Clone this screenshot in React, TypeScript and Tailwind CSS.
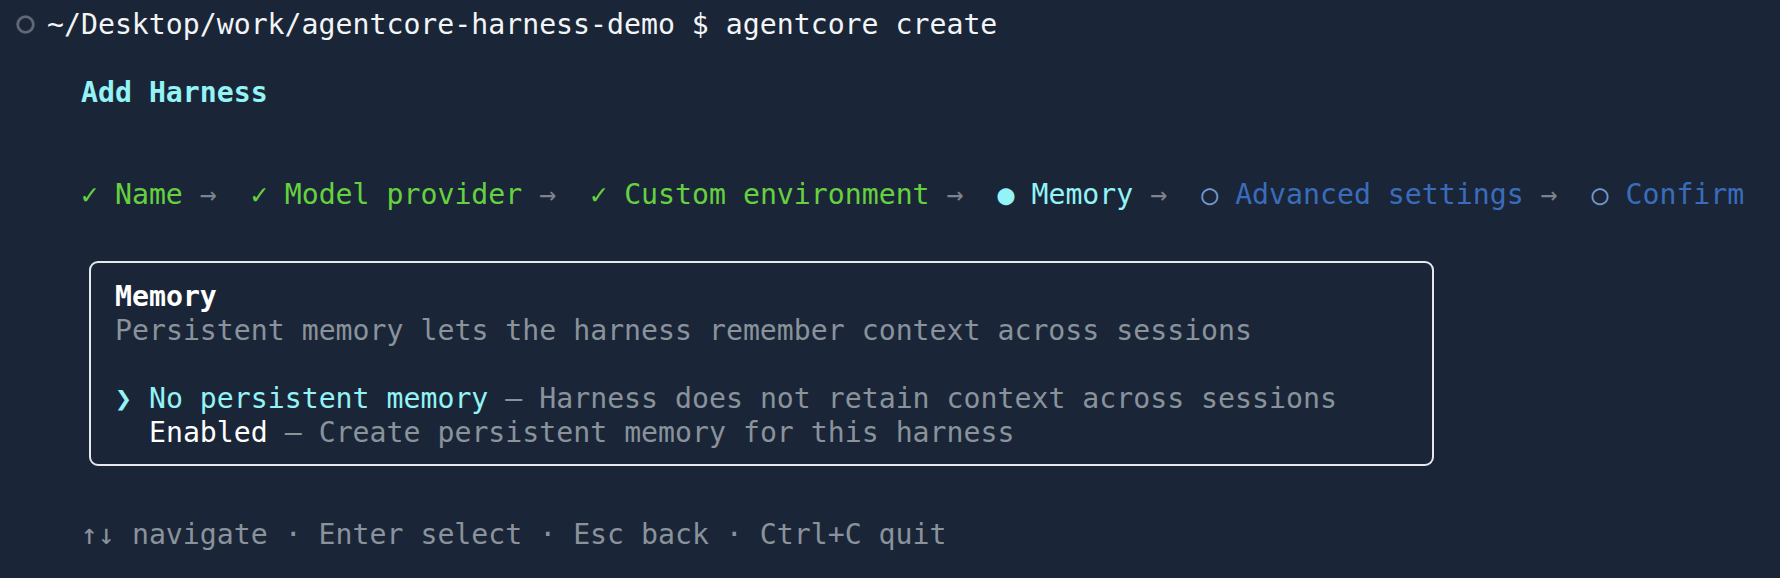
import type { ReactNode } from "react";

type StepState = "done" | "active" | "pending";

interface Step {
  label: string;
  state: StepState;
}

const steps: Step[] = [
  { label: "Name", state: "done" },
  { label: "Model provider", state: "done" },
  { label: "Custom environment", state: "done" },
  { label: "Memory", state: "active" },
  { label: "Advanced settings", state: "pending" },
  { label: "Confirm", state: "pending" },
];

function Line({ children }: { children?: ReactNode }) {
  return <div className="h-[34px] whitespace-pre">{children}</div>;
}

function StepLabel({ step }: { step: Step }) {
  if (step.state === "done") {
    return <span className="text-[#66d13f]">✓ {step.label}</span>;
  }

  if (step.state === "active") {
    return <span className="text-[#93f3f5]">● {step.label}</span>;
  }

  return (
    <>
      <span className="text-[#7598cf]">○</span>{" "}
      <span className="text-[#3a6cbc]">{step.label}</span>
    </>
  );
}

export default function App() {
  return (
    <div className="h-[578px] w-full overflow-hidden bg-[#1a2638] pt-[8px] font-['DejaVu_Sans_Mono',monospace] text-[28.2px] leading-[34px] text-[#f3f4f5]">

      {/* prompt */}
      <div className="flex h-[34px] items-center pl-[15px]">
        <svg width="21" height="21" viewBox="0 0 21 21" className="shrink-0 -translate-y-px">
          <circle cx="10.5" cy="10.5" r="7.8" fill="none" stroke="#5f6874" strokeWidth="2.8" />
        </svg>
        <span className="ml-[11px] whitespace-pre">
          ~/Desktop/work/agentcore-harness-demo $ agentcore create
        </span>
      </div>

      <div className="pl-[81px]">
        <Line />
        <Line>
          <span className="font-bold text-[#93f3f5]">Add Harness</span>
        </Line>
        <Line />
        <Line />

        <Line>
          {steps.map((step, i) => (
            <span key={step.label}>
              <StepLabel step={step} />
              {i < steps.length - 1 && (
                <span className="text-[#7d848d]"> →  </span>
              )}
            </span>
          ))}
        </Line>

        <div className="mt-[49px] ml-[8px] w-[1345px] rounded-[9px] border-2 border-[#e6e9ec] pt-[17px] pb-[14px] pl-[24px]">
          <Line>
            <span className="font-bold text-white">Memory</span>
          </Line>
          <Line>
            <span className="text-[#8a929b]">
              Persistent memory lets the harness remember context across sessions
            </span>
          </Line>
          <Line />
          <Line>
            <span className="inline-block w-[1ch] text-center text-[#93f3f5]">❯</span>
            <span className="text-[#93f3f5]"> No persistent memory</span>
            <span className="text-[#8a929b]"> – Harness does not retain context across sessions</span>
          </Line>
          <Line>
            <span>  </span>
            <span className="text-white">Enabled</span>
            <span className="text-[#8a929b]"> – Create persistent memory for this harness</span>
          </Line>
        </div>

        <div className="mt-[52px]">
          <Line>
            <span className="text-[#8a929b]">↑↓ navigate · Enter select · Esc back · Ctrl+C quit</span>
          </Line>
        </div>
      </div>

    </div>
  );
}
